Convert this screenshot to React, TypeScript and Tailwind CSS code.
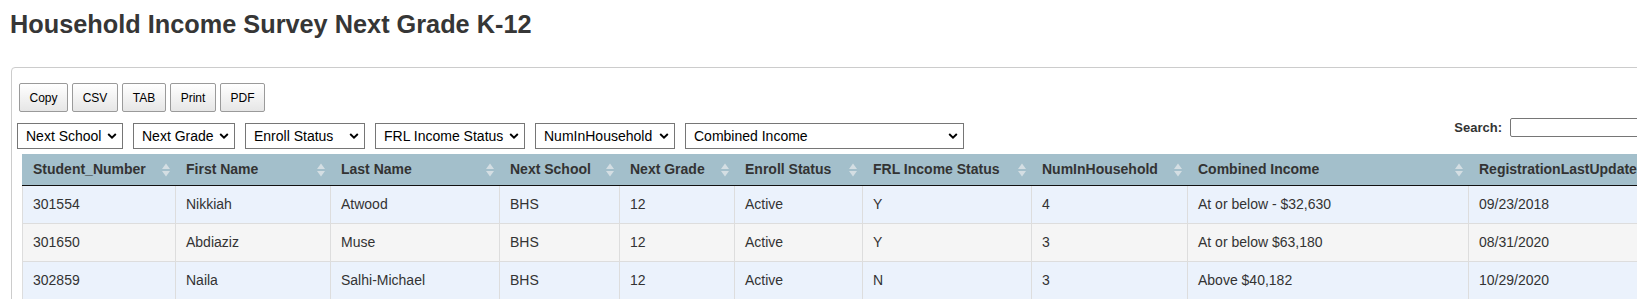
import { ReactNode } from 'react'

const columns = [
  { label: 'Student_Number', col: 'w-[153px]' },
  { label: 'First Name', col: 'w-[155px]' },
  { label: 'Last Name', col: 'w-[169px]' },
  { label: 'Next School', col: 'w-[120px]' },
  { label: 'Next Grade', col: 'w-[115px]' },
  { label: 'Enroll Status', col: 'w-[128px]' },
  { label: 'FRL Income Status', col: 'w-[169px]' },
  { label: 'NumInHousehold', col: 'w-[156px]' },
  { label: 'Combined Income', col: 'w-[281px]' },
  { label: 'RegistrationLastUpdate', col: 'w-[220px]' },
]

const rows = [
  ['301554', 'Nikkiah', 'Atwood', 'BHS', '12', 'Active', 'Y', '4', 'At or below - $32,630', '09/23/2018'],
  ['301650', 'Abdiaziz', 'Muse', 'BHS', '12', 'Active', 'Y', '3', 'At or below $63,180', '08/31/2020'],
  ['302859', 'Naila', 'Salhi-Michael', 'BHS', '12', 'Active', 'N', '3', 'Above $40,182', '10/29/2020'],
]

const buttons = [
  { label: 'Copy', w: 'w-[49px]' },
  { label: 'CSV', w: 'w-[46px]' },
  { label: 'TAB', w: 'w-[44px]' },
  { label: 'Print', w: 'w-[46px]' },
  { label: 'PDF', w: 'w-[45px]' },
]

const filters = [
  { label: 'Next School', w: 'w-[106px]' },
  { label: 'Next Grade', w: 'w-[102px]' },
  { label: 'Enroll Status', w: 'w-[120px]' },
  { label: 'FRL Income Status', w: 'w-[150px]' },
  { label: 'NumInHousehold', w: 'w-[140px]' },
  { label: 'Combined Income', w: 'w-[279px]' },
]

function SortIcon() {
  return (
    <svg width="8" height="14" viewBox="0 0 8 14" className="shrink-0">
      <path d="M0 6 L4 0.5 L8 6 Z" fill="#d4dee3" />
      <path d="M0 8 L8 8 L4 13.5 Z" fill="#d4dee3" />
    </svg>
  )
}

function FilterSelect({ label, w }: { label: string; w: string }) {
  return (
    <div className={`relative ${w}`}>
      <select className="h-[26px] w-full appearance-none rounded-none border border-[#767676] bg-white pl-[8px] pr-[20px] text-[14px] text-black outline-none">
        <option>{label}</option>
      </select>
      <svg
        width="10"
        height="7"
        viewBox="0 0 10 7"
        className="pointer-events-none absolute right-[6px] top-1/2 -translate-y-1/2"
      >
        <path d="M1.2 1.5 L5 5.2 L8.8 1.5" fill="none" stroke="#000" strokeWidth="1.9" />
      </svg>
    </div>
  )
}

function HeadCell({ children }: { children: ReactNode }) {
  return (
    <th className="h-[31px] border-b border-[#111] p-0 text-left text-[14px] font-bold text-[#333]">
      <div className="flex items-center justify-between pl-[11px] pr-[5px] leading-[31px] whitespace-nowrap">
        <span>{children}</span>
        <SortIcon />
      </div>
    </th>
  )
}

export default function App() {
  return (
    <div className="h-[299px] w-full overflow-hidden bg-white font-['Liberation_Sans',Arial,sans-serif] text-[#333]">
      <div className="pt-[9px]">
        <h1 className="ml-[10px] text-[25.3px] font-bold leading-[30px] text-[#363636]">
          Household Income Survey Next Grade K-12
        </h1>

        <div className="ml-[11px] mt-[28px] w-[1705px] rounded-[4px] border border-[#ccc] pb-[20px] pl-[5px] pr-[5px] pt-[15px]">
          <div className="flex items-start">
            <div className="flex flex-col">
              <div className="ml-[2px] flex gap-[4px]">
                {buttons.map((b) => (
                  <button
                    key={b.label}
                    className={`h-[29px] ${b.w} rounded-[2px] border border-[#9a9a9a] bg-linear-to-b from-white to-[#e6e6e6] text-[12px] text-black`}
                  >
                    {b.label}
                  </button>
                ))}
              </div>
              <div className="mt-[11px] flex gap-[10px]">
                {filters.map((f) => (
                  <FilterSelect key={f.label} label={f.label} w={f.w} />
                ))}
              </div>
            </div>

            <label className="ml-auto mt-[35px] flex items-center text-[13px] font-bold text-[#333]">
              <span className="mr-[8px]">Search:</span>
              <input
                type="search"
                className="h-[19px] w-[200px] rounded-[2px] border border-[#767676] bg-white px-[2px] text-[13px] font-normal outline-none"
              />
            </label>
          </div>

          <table className="ml-[5px] mt-[5px] w-[1666px] table-fixed border-separate border-spacing-0">
            <colgroup>
              {columns.map((c) => (
                <col key={c.label} className={c.col} />
              ))}
            </colgroup>
            <thead className="bg-[#a3bfcb]">
              <tr>
                {columns.map((c) => (
                  <HeadCell key={c.label}>{c.label}</HeadCell>
                ))}
              </tr>
            </thead>
            <tbody>
              {rows.map((r, i) => (
                <tr key={r[0]} className={i % 2 === 0 ? 'bg-[#ebf2fc]' : 'bg-[#f5f5f5]'}>
                  {r.map((v, j) => (
                    <td
                      key={j}
                      className="border-b border-l border-[#dddddd] p-0 pl-[10px] text-[14px] leading-[37px] whitespace-nowrap text-[#333]"
                    >
                      {v}
                    </td>
                  ))}
                </tr>
              ))}
            </tbody>
          </table>
        </div>
      </div>
    </div>
  )
}
